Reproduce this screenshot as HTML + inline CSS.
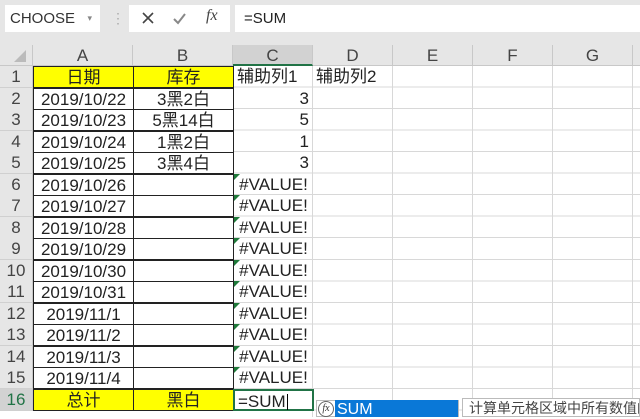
<!DOCTYPE html><html><head><meta charset="utf-8"><style>
*{margin:0;padding:0;box-sizing:border-box}
body{width:640px;height:417px;overflow:hidden;background:#fff;position:relative;font-family:"Liberation Sans","Noto Sans CJK SC",sans-serif;color:#222}
.tb{position:absolute;left:0;top:0;width:640px;height:45px;background:#e6e6e6}
.nb{position:absolute;left:5px;top:5px;width:95px;height:27px;background:#fff;font-size:15px;line-height:27px;padding-left:5px;color:#333}
.fx{position:absolute;left:129px;top:5px;width:101px;height:27px;background:#fff}
.fb{position:absolute;left:235px;top:5px;width:405px;height:27px;background:#fff;font-size:15px;line-height:27px;padding-left:9px;color:#222}
.ch{position:absolute;top:45px;height:21px;background:#e6e6e6;border-right:1px solid #c8c8c8;border-bottom:1px solid #c8c8c8;text-align:center;font-size:17px;line-height:21px;color:#444}
.grid{position:absolute;left:233px;top:66px;width:407px;height:351px;background-image:repeating-linear-gradient(to bottom,transparent 0,transparent 20.53px,#d8d8d8 20.53px,#d8d8d8 21.53px),repeating-linear-gradient(to right,transparent 0,transparent 79px,#d8d8d8 79px,#d8d8d8 80px)}
.r{position:absolute;left:0;height:21.53px;width:640px;font-size:17px;line-height:21px}
.r span{position:absolute;top:0;height:22px}
.h{left:0;width:33px;background:#e6e6e6;border-right:1px solid #c8c8c8;border-bottom:1px solid #d0d0d0;text-align:center;color:#444}
.a{left:33px;width:101px;border:1px solid #222;text-align:center}
.b{left:133px;width:101px;border:1px solid #222;text-align:center}
.c{left:234px;width:79px;text-align:right;padding-right:4px}
.d{left:316px;width:80px}
.y{background:#ffff00}
.e{text-align:center!important;padding:0!important}
.e:before{content:"";position:absolute;left:0;top:0;border-top:6px solid #1f7a3a;border-right:6px solid transparent}
</style></head><body>
<div class="tb">
<div class="nb">CHOOSE<span style="position:absolute;right:8px;top:0;font-size:9px;color:#888">▾</span></div>
<div style="position:absolute;left:111px;top:10px;color:#aaa;font-size:14px">⋮</div>
<div class="fx">
<svg width="101" height="27" style="position:absolute;left:0;top:0"><path d="M14 8l10 10M24 8L14 18" stroke="#444" stroke-width="1.6"/><path d="M45 14l4 4 7-9" stroke="#888" stroke-width="2" fill="none"/></svg>
<span style="position:absolute;left:77px;top:2px;font-family:'Liberation Serif',serif;font-style:italic;font-size:16px;color:#444">fx</span></div>
<div class="fb">=SUM</div>
</div>
<div class="ch" style="left:0;width:33px"><svg width="33" height="21"><path d="M26 5v12H14z" fill="#bbb"/></svg></div>
<div class="ch" style="left:33px;width:100px">A</div>
<div class="ch" style="left:133px;width:100px">B</div>
<div class="ch" style="left:233px;width:80px;background:#d2d2d2;border-bottom:2px solid #217346">C</div>
<div class="ch" style="left:313px;width:80px">D</div>
<div class="ch" style="left:393px;width:80px">E</div>
<div class="ch" style="left:473px;width:80px">F</div>
<div class="ch" style="left:553px;width:80px">G</div>
<div class="ch" style="left:633px;width:10px"></div>
<div class="grid"></div>
<div class="r" style="top:66px"><span class="h">1</span><span class="a y">日期</span><span class="b y">库存</span><span class="c" style="text-align:left;padding-left:3px;width:85px">辅助列1</span><span class="d">辅助列2</span></div>
<div class="r" style="top:87.5px"><span class="h">2</span><span class="a">2019/10/22</span><span class="b">3黑2白</span><span class="c">3</span></div>
<div class="r" style="top:109.1px"><span class="h">3</span><span class="a">2019/10/23</span><span class="b">5黑14白</span><span class="c">5</span></div>
<div class="r" style="top:130.6px"><span class="h">4</span><span class="a">2019/10/24</span><span class="b">1黑2白</span><span class="c">1</span></div>
<div class="r" style="top:152.1px"><span class="h">5</span><span class="a">2019/10/25</span><span class="b">3黑4白</span><span class="c">3</span></div>
<div class="r" style="top:173.7px"><span class="h">6</span><span class="a">2019/10/26</span><span class="b"></span><span class="c e">#VALUE!</span></div>
<div class="r" style="top:195.2px"><span class="h">7</span><span class="a">2019/10/27</span><span class="b"></span><span class="c e">#VALUE!</span></div>
<div class="r" style="top:216.7px"><span class="h">8</span><span class="a">2019/10/28</span><span class="b"></span><span class="c e">#VALUE!</span></div>
<div class="r" style="top:238.2px"><span class="h">9</span><span class="a">2019/10/29</span><span class="b"></span><span class="c e">#VALUE!</span></div>
<div class="r" style="top:259.8px"><span class="h">10</span><span class="a">2019/10/30</span><span class="b"></span><span class="c e">#VALUE!</span></div>
<div class="r" style="top:281.3px"><span class="h">11</span><span class="a">2019/10/31</span><span class="b"></span><span class="c e">#VALUE!</span></div>
<div class="r" style="top:302.8px"><span class="h">12</span><span class="a">2019/11/1</span><span class="b"></span><span class="c e">#VALUE!</span></div>
<div class="r" style="top:324.4px"><span class="h">13</span><span class="a">2019/11/2</span><span class="b"></span><span class="c e">#VALUE!</span></div>
<div class="r" style="top:345.9px"><span class="h">14</span><span class="a">2019/11/3</span><span class="b"></span><span class="c e">#VALUE!</span></div>
<div class="r" style="top:367.4px"><span class="h">15</span><span class="a">2019/11/4</span><span class="b"></span><span class="c e">#VALUE!</span></div>
<div class="r" style="top:389px"><span class="h" style="background:#d2d2d2;color:#217346">16</span><span class="a y">总计</span><span class="b y">黑白</span><span class="c" style="text-align:left;padding-left:3px;border:2px solid #217346;left:233px;width:81px;background:#fff">=SUM<span style="position:relative;display:inline-block;width:1px;height:16px;background:#000;top:3px;margin-left:1px"></span></span></div>
<div style="position:absolute;left:316px;top:400px;width:143px;height:17px;background:#fff;border:1px solid #bbb"></div>
<div style="position:absolute;left:318px;top:401px;width:16px;height:16px;border:1px solid #666;border-radius:50%;font-family:'Liberation Serif',serif;font-style:italic;font-size:10px;line-height:14px;text-align:center;color:#333">fx</div>
<div style="position:absolute;left:335px;top:400px;width:123px;height:17px;background:#0a78d7;color:#fff;font-size:16px;line-height:19px;padding-left:2px">SUM</div>
<div style="position:absolute;left:462px;top:398px;width:178px;height:19px;background:#fff;border:1px solid #bbb;font-size:14px;line-height:19px;padding-left:6px;color:#444;white-space:nowrap;overflow:hidden">计算单元格区域中所有数值的和</div>
</body></html>
